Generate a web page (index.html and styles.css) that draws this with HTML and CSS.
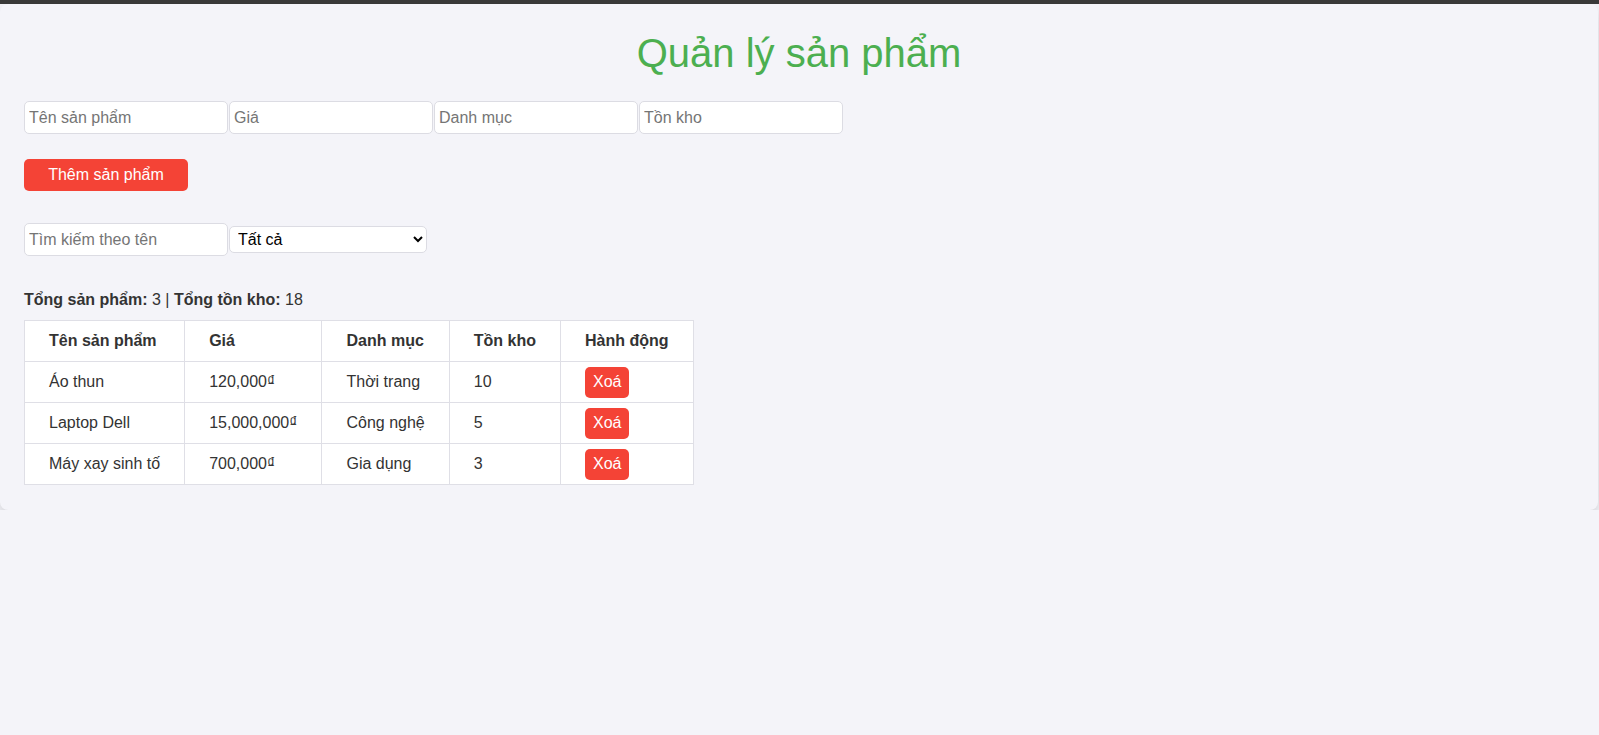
FILE: index.html
```html
<!DOCTYPE html>
<html lang="vi">
<head>
<meta charset="utf-8">
<title>Quản lý sản phẩm</title>
<link rel="stylesheet" href="styles.css">
</head>
<body>
<div class="topbar"></div>
<div class="card">
  <h1 class="title">Quản lý sản phẩm</h1>
  <div class="form-row">
    <input class="field" type="text" placeholder="Tên sản phẩm">
    <input class="field" type="text" placeholder="Giá">
    <input class="field" type="text" placeholder="Danh mục">
    <input class="field" type="text" placeholder="Tồn kho">
  </div>
  <div class="btn-row">
    <button class="btn-add">Thêm sản phẩm</button>
  </div>
  <div class="filter-row">
    <input class="field" type="text" placeholder="Tìm kiếm theo tên">
    <select class="select">
      <option>Tất cả</option>
    </select>
  </div>
  <p class="summary"><strong>Tổng sản phẩm:</strong> 3 | <strong>Tổng tồn kho:</strong> 18</p>
  <table class="table">
    <thead>
      <tr><th>Tên sản phẩm</th><th>Giá</th><th>Danh mục</th><th>Tồn kho</th><th>Hành động</th></tr>
    </thead>
    <tbody>
      <tr><td>Áo thun</td><td>120,000₫</td><td>Thời trang</td><td>10</td><td class="action"><button class="btn-del">Xoá</button></td></tr>
      <tr><td>Laptop Dell</td><td>15,000,000₫</td><td>Công nghệ</td><td>5</td><td class="action"><button class="btn-del">Xoá</button></td></tr>
      <tr><td>Máy xay sinh tố</td><td>700,000₫</td><td>Gia dụng</td><td>3</td><td class="action"><button class="btn-del">Xoá</button></td></tr>
    </tbody>
  </table>
</div>
</body>
</html>
```

FILE: styles.css
```css
html, body {
  margin: 0;
  padding: 0;
  background: #f4f4f9;
  font-family: "Liberation Sans", Arial, sans-serif;
  color: #333;
  font-size: 16px;
}

.topbar {
  height: 4px;
  background: #3a3a3a;
}

.card {
  margin-right: 1px;
  padding: 0 24px 25px;
  background: #f4f4f9;
  border-radius: 8px;
  box-shadow: 0 6px 14px rgba(0, 0, 0, 0.14);
}

.title {
  margin: 0;
  padding-top: 27px;
  font-size: 40px;
  font-weight: normal;
  color: #4caf50;
  text-align: center;
  line-height: 45px;
}

.form-row {
  display: flex;
  gap: 1px;
  margin-top: 25px;
}

.field {
  box-sizing: border-box;
  width: 204px;
  height: 33px;
  padding: 0 4px;
  border: 1px solid #dcdce3;
  border-radius: 5px;
  background: #fff;
  font-family: "Liberation Sans", Arial, sans-serif;
  font-size: 16px;
  color: #333;
  outline: none;
}

.field::placeholder {
  color: #757575;
}

.btn-row {
  margin-top: 25px;
}

.btn-add {
  display: block;
  box-sizing: border-box;
  width: 164px;
  height: 32px;
  padding: 0 24px;
  border: none;
  border-radius: 5px;
  background: #f44336;
  color: #fff;
  font-family: "Liberation Sans", Arial, sans-serif;
  font-size: 16px;
}

.filter-row {
  display: flex;
  align-items: center;
  gap: 1px;
  margin-top: 32px;
}

.select {
  box-sizing: border-box;
  width: 198px;
  height: 27px;
  padding: 0 4px;
  border: 1px solid #dcdce3;
  border-radius: 5px;
  background: #fff;
  font-family: "Liberation Sans", Arial, sans-serif;
  font-size: 16px;
  color: #000;
}

.summary {
  margin: 34px 0 11px;
  line-height: 19px;
}

.table {
  border-collapse: collapse;
  background: #fff;
}

.table th,
.table td {
  border: 1px solid #dfdfe6;
  padding: 5px 24px;
  line-height: 30px;
  text-align: left;
  white-space: nowrap;
}

.table th {
  font-weight: bold;
}

.btn-del {
  display: block;
  box-sizing: border-box;
  height: 31px;
  padding: 0 8px;
  margin: -0.5px 0;
  border: none;
  border-radius: 5px;
  background: #f44336;
  color: #fff;
  font-family: "Liberation Sans", Arial, sans-serif;
  font-size: 16px;
}
```
